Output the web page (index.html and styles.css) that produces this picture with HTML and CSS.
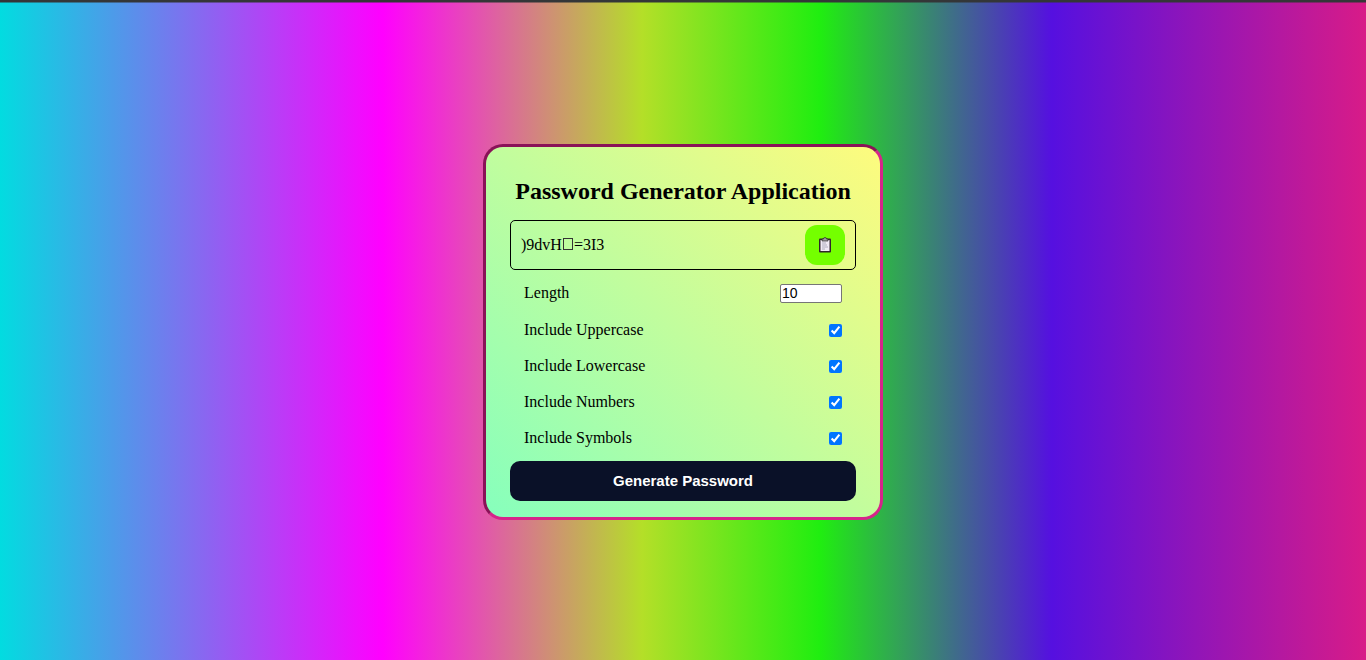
FILE: index.html
```html
<!DOCTYPE html>
<html lang="en">
<head>
<meta charset="utf-8">
<title>Password Generator Application</title>
<link rel="stylesheet" href="styles.css">
</head>
<body>
<main class="card">
  <h2 class="title">Password Generator Application</h2>
  <div class="result">
    <output class="password" id="password">)9dvH<svg class="missing" viewBox="0 0 12 12" role="img" aria-label="Unprintable character"><rect x="1.5" y="0.5" width="9" height="11"/></svg>=3I3</output>
    <button class="copy" type="button" aria-label="Copy password">
      <svg class="clipboard" viewBox="0 0 14 16" aria-hidden="true">
        <rect x="1" y="1.500" width="12" height="14" rx="1" fill="#30252b"/>
        <path d="M2.500 3h9v11h-9z" fill="#f0eaf4"/>
        <path d="M4 2h1.500a1.500 1.500 0 0 1 3 0H10v2H4z" fill="#a0a0a0" stroke="#29252a" stroke-width=".7"/>
        <path d="M4 6h4M4 8h5M4 10h6M4 12h3" stroke="#a09eb0" stroke-width=".8"/>
      </svg>
    </button>
  </div>
  <form class="settings">
    <div class="setting"><label for="length">Length</label><input class="length" type="number" id="length" min="4" max="20" value="10"></div>
    <div class="options">
      <div class="setting"><label for="uppercase">Include Uppercase</label><input class="check" type="checkbox" id="uppercase" checked></div>
      <div class="setting"><label for="lowercase">Include Lowercase</label><input class="check" type="checkbox" id="lowercase" checked></div>
      <div class="setting"><label for="numbers">Include Numbers</label><input class="check" type="checkbox" id="numbers" checked></div>
      <div class="setting"><label for="symbols">Include Symbols</label><input class="check" type="checkbox" id="symbols" checked></div>
    </div>
    <button class="generate" type="button">Generate Password</button>
  </form>
</main>
</body>
</html>
```
FILE: styles.css
```css
* { box-sizing: border-box; }

body {
  margin: 0;
  min-height: 100vh;
  display: flex;
  align-items: center;
  justify-content: center;
  padding: 2px 16px 0;
  border-top: 2px solid #343638;
  font: 16px/18px "Liberation Serif", "Times New Roman", serif;
  color: #000;
  background:
    linear-gradient(#34363880, #34363880) 0 2px / 100% 1px no-repeat,
    linear-gradient(90deg, #02dce0 0%, #ff00ff 28%, #b4df28 47%, #20ee10 60%, #5510e0 77%, #d81b88 100%);
}

.card {
  width: 100%;
  max-width: 400px;
  padding: 30px 24px 16px;
  border: 3px solid;
  border-color: #8a1258 #d6248a #d6248a #8a1258;
  border-radius: 20px;
  background: linear-gradient(45deg, #85ffbd 0%, #fffb7d 100%);
  background-origin: border-box;
}

.title {
  margin: 0 0 15px;
  font-size: 24px;
  line-height: 28px;
  text-align: center;
  white-space: nowrap;
}

.result {
  display: flex;
  align-items: center;
  justify-content: space-between;
  height: 50px;
  padding: 0 10px;
  border: 1px solid #000;
  border-radius: 5px;
}

.missing {
  width: 12px;
  height: 12px;
  fill: none;
  stroke: #333;
  stroke-width: 1;
}

.copy {
  display: grid;
  place-items: center;
  width: 40px;
  height: 40px;
  padding: 0;
  border: 0;
  border-radius: 12px;
  background: #74ff00;
}

.clipboard { width: 14px; height: 16px; }

.settings { padding-top: 5px; }

.options { padding: 1px 0 5px; }

.setting {
  display: flex;
  align-items: center;
  justify-content: space-between;
  height: 36px;
  padding: 0 14px;
}

.length {
  width: 62px;
  height: 19px;
  margin: 0;
  padding: 1px;
  border: 1px solid #767676;
  border-radius: 2px;
  background: #fff;
  font: 14px/16px "Liberation Sans", Arial, sans-serif;
}

.check {
  width: 13px;
  height: 13px;
  margin: 0;
}

.generate {
  display: block;
  width: 100%;
  height: 40px;
  border: 0;
  border-radius: 10px;
  background: #0a1128;
  color: #fff;
  font: bold 15px/18px "Liberation Sans", Arial, sans-serif;
}
```
